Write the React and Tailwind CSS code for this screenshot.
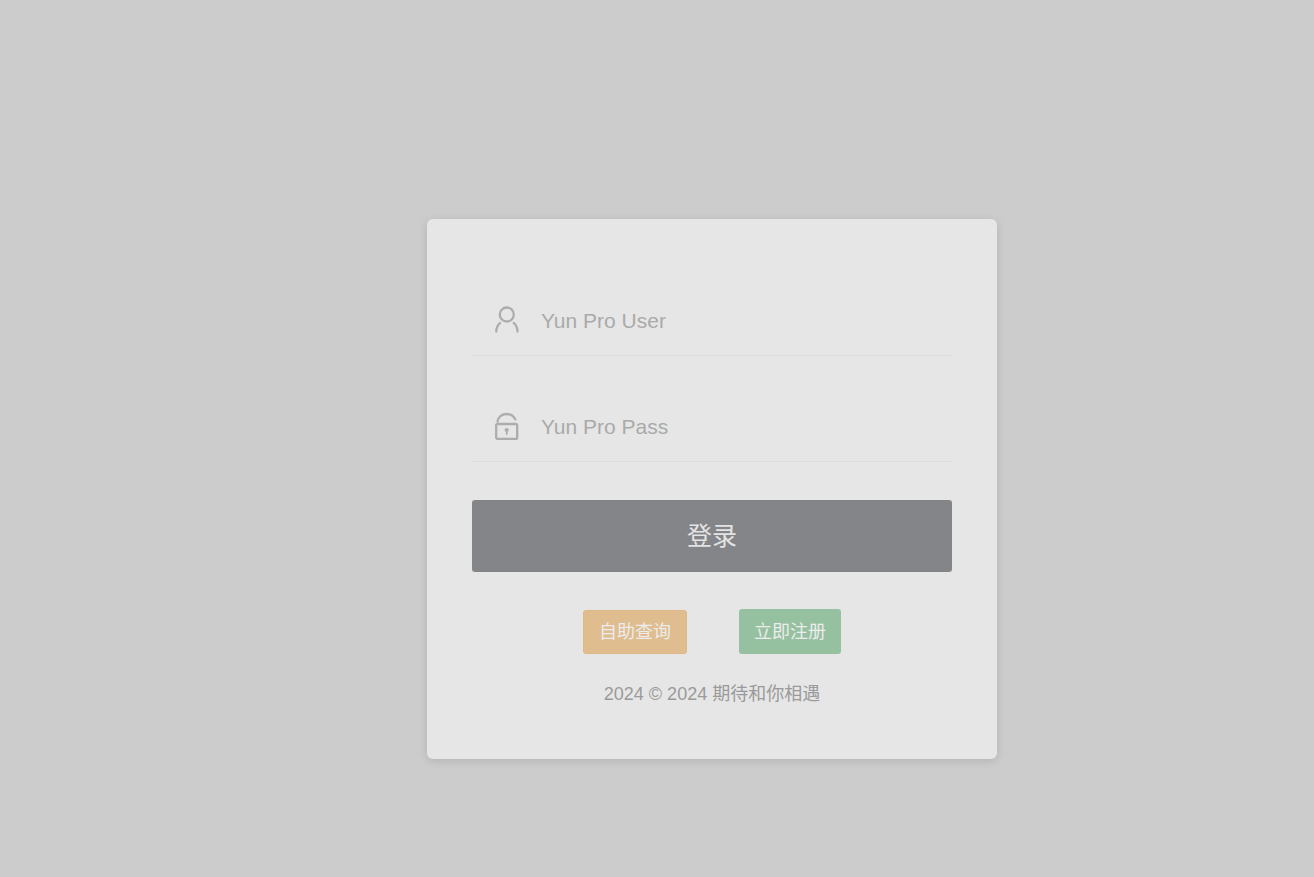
import { useState } from "react";

const font = "font-['Liberation_Sans','Noto_Sans_CJK_SC',sans-serif]";

function UserIcon() {
    return (
        <svg width="24" height="28" viewBox="0 0 24 28" fill="none" stroke="#adadad" strokeWidth="2.3" strokeLinecap="round">
            <circle cx="11.800" cy="8.500" r="7" />
            <path d="M1.300 25.500c0-3.400 1.400-6.500 3.800-8.600" />
            <path d="M22.500 25.500c0-3.400-1.400-6.500-3.800-8.600" />
        </svg>
    );
}

function LockIcon() {
    return (
        <svg width="24" height="28" viewBox="0 0 24 28" fill="none" stroke="#adadad" strokeWidth="2.300" strokeLinecap="round">
            <path d="M2.500 9.500c.6-4.600 4.400-7.500 9-7.500 4 0 7.300 2 8.800 5.400" />
            <rect x="1.200" y="12" width="21" height="15" rx="1.500" />
            <circle cx="11.700" cy="18" r="2.100" fill="#adadad" stroke="none" />
            <path d="M11.700 18.500v3.500" strokeWidth="1.800" />
        </svg>
    );
}

function Field({ icon, placeholder, type = "text" }) {
    const [value, setValue] = useState("");
    return (
        <div className="flex h-[71px] items-center border-b border-[#dcdcdc] pl-[23px]">
            {icon}
            <input
                type={type === "password" ? "password" : "text"}
                value={value}
                onChange={(e) => setValue(e.target.value)}
                placeholder={placeholder}
                className="ml-[22px] w-[380px] bg-transparent pt-[2px] text-[21px] text-[#aaaaaa] outline-none placeholder:text-[#aaaaaa]"
            />
        </div>
    );
}

export default function App() {
    return (
        <div className={`min-h-screen bg-[#cccccc] pt-[219px] pl-[427px] ${font}`}>
            <div className="flex h-[540px] w-[570px] flex-col rounded-md bg-[#e6e6e6] px-[45px] pt-[66px] shadow-[0_2px_10px_rgba(0,0,0,0.12)]">
                <Field icon={<UserIcon />} placeholder="Yun Pro User" />
                <div className="mt-[35px]">
                    <Field icon={<LockIcon />} placeholder="Yun Pro Pass" type="password" />
                </div>
                <button className="mt-[38px] h-[72px] rounded-[3px] bg-[#838589] pt-[2px] text-[25px] text-[#e3e3e3]">
                    登录
                </button>
                <div className="mt-[37px] flex items-end justify-center gap-[52px]">
                    <a className="flex h-[44px] w-[104px] items-center justify-center rounded-[3px] border border-[#dcb985] bg-[#dfbd8e] text-[18px] text-[#ececec]">
                        自助查询
                    </a>
                    <a className="flex h-[45px] w-[102px] items-center justify-center rounded-[3px] bg-[#96c1a1] pt-[2px] text-[18px] text-[#ececec]">
                        立即注册
                    </a>
                </div>
                <p className="mt-[27px] text-center text-[18px] text-[#9a9a9a]">2024 © 2024 期待和你相遇</p>
            </div>
        </div>
    );
}
